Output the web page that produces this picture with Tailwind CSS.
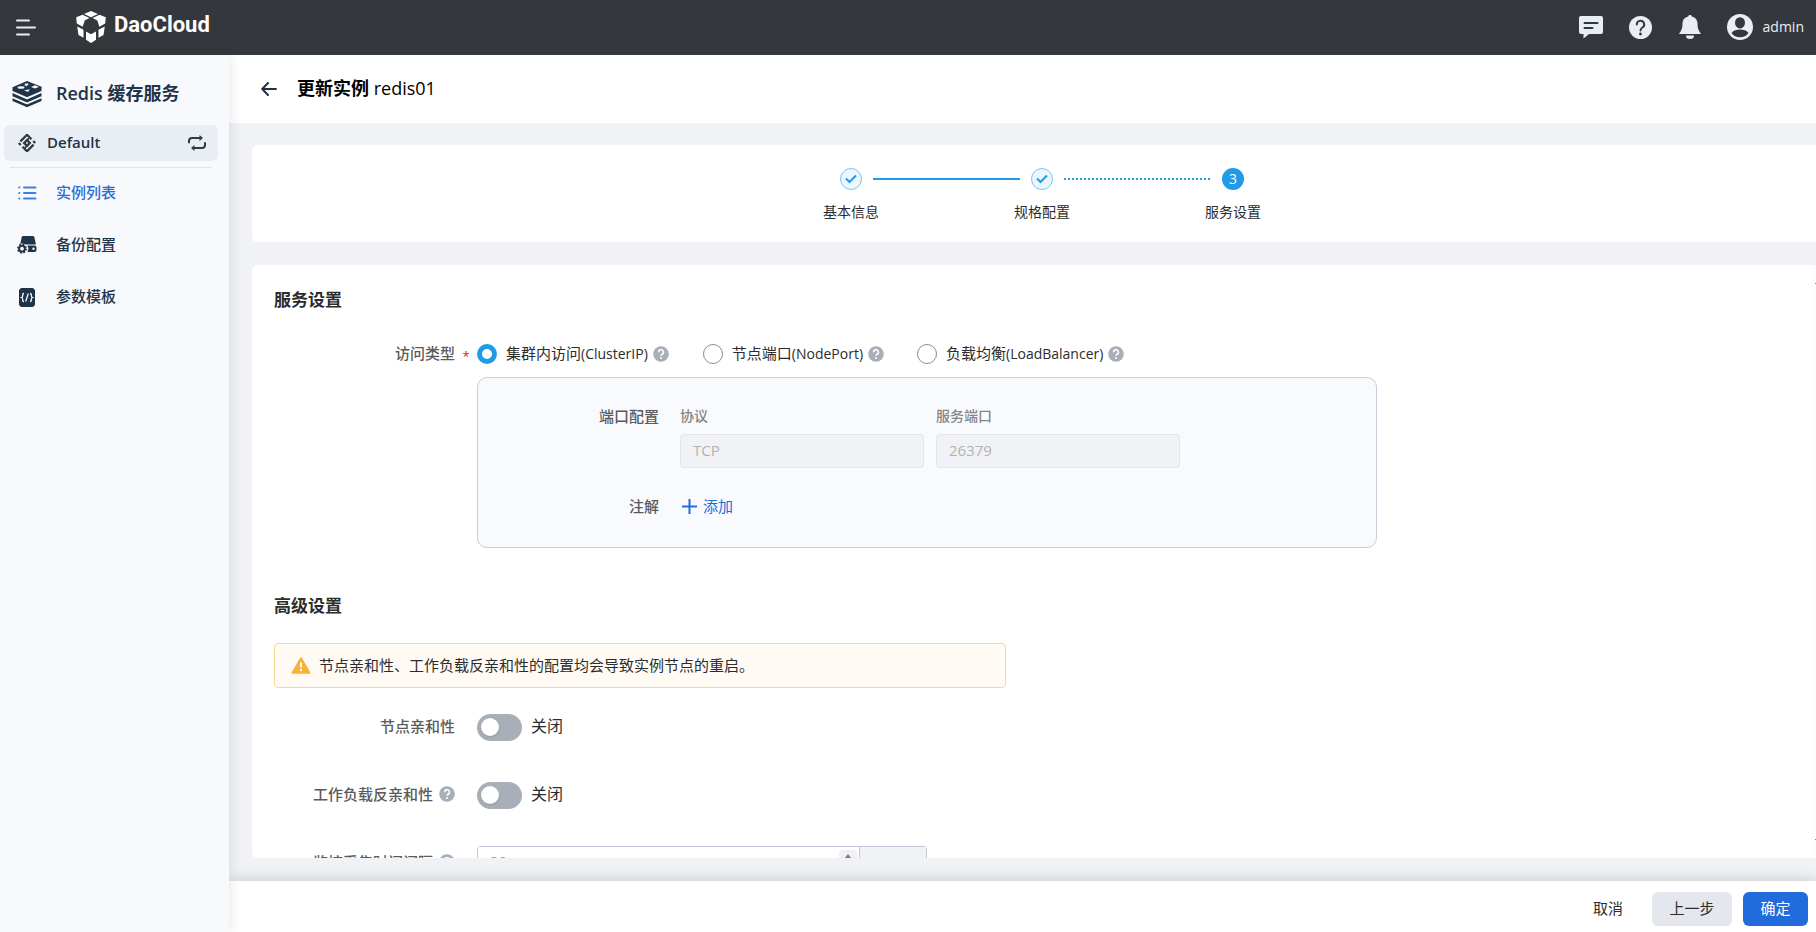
<!DOCTYPE html>
<html lang="zh-CN">
<head>
<meta charset="utf-8">
<title>更新实例 redis01</title>
<script src="https://cdn.jsdelivr.net/npm/@tailwindcss/browser@4"></script>
</head>
<body class="flex h-screen flex-col overflow-hidden bg-[#f1f2f6] font-['Open_Sans','Noto_Sans_CJK_SC',sans-serif] text-[15px] leading-5 text-[#2c2c2c]">
<svg class="hidden" aria-hidden="true">
  <symbol id="help" viewBox="0 0 16 16"><circle cx="8" cy="8" r="7.8" fill="#a9afb8"/><path d="M5.6 6.2a2.4 2.4 0 1 1 3.5 2.1c-.8.4-1.1.8-1.1 1.5" fill="none" stroke="#fff" stroke-width="1.6"/><circle cx="8" cy="12" r="1" fill="#fff"/></symbol>
</svg>

<header class="flex h-[55px] shrink-0 items-center bg-[#34373c] pr-3 pb-px pl-4 text-[#e9eef5]">
  <button type="button" aria-label="菜单" class="mr-10"><svg class="h-[17px] w-5" viewBox="0 0 20 17" stroke="currentColor" stroke-width="2" stroke-linecap="round"><path d="M1 1.500h12M1 8.500h18M1 15.500h12"/></svg></button>
  <a href="#" class="flex items-center gap-2 text-white">
    <svg class="h-8 w-[30px]" viewBox="0 0 30 32" fill="currentColor"><path d="M15 0l7 3-7 3.200L8 3zM6.500 3.800l7 3.200-4.800 2.600-2 6.200L.8 12.500.2 6.200zM23.500 3.800l-7 3.200 4.800 2.600 2 6.200 5.900-3.300.6-6.300zM1.200 15.500l6.300 3.300v8L2.500 24zM28.800 15.500l-6.300 3.300v8l5-2.800zM10 20.500l5 2.800 5-2.800v8.300L15 32l-5-3.200z"/></svg>
    <span class="pb-1 font-[Roboto] text-[22px] leading-7 font-bold">DaoCloud</span>
  </a>
  <div class="ml-auto flex items-center">
    <button type="button" aria-label="消息"><svg class="h-[23px] w-6" viewBox="0 0 24 23"><path d="M2 0h20a2 2 0 0 1 2 2v14a2 2 0 0 1-2 2H10l-5.500 4.500V18H2a2 2 0 0 1-2-2V2a2 2 0 0 1 2-2z" fill="currentColor"/><path d="M5.500 7h13M5.500 12h8" stroke="#34373c" stroke-width="2" stroke-linecap="round"/></svg></button>
    <button type="button" aria-label="帮助" class="ml-[26px]"><svg class="size-[23px]" viewBox="0 0 23 23"><circle cx="11.500" cy="11.500" r="11.500" fill="currentColor"/><path d="M7.800 8.500a3.700 3.600 0 1 1 5.600 3c-1.400.8-1.900 1.400-1.900 2.900" fill="none" stroke="#34373c" stroke-width="2" stroke-linecap="round"/><circle cx="11.500" cy="18" r="1.400" fill="#34373c"/></svg></button>
    <button type="button" aria-label="通知" class="ml-[27px]"><svg class="h-6 w-[22px]" viewBox="0 0 22 24" fill="currentColor"><path d="M11 0c1 0 1.700.6 1.800 1.400C16.500 2.300 18.500 5 18.500 8.500c0 5 1 6.500 3.500 10.500H0c2.500-4 3.500-5.500 3.500-10.500 0-3.500 2-6.200 5.700-7.100C9.300.6 10 0 11 0zM7 20.500h8a4 3.500 0 0 1-8 0z"/></svg></button>
    <button type="button" class="ml-[26px] flex items-center gap-[10px] text-[14px]"><svg class="size-[26px]" viewBox="0 0 26 26"><circle cx="13" cy="13" r="13" fill="currentColor"/><ellipse cx="13" cy="8.800" rx="5" ry="5.600" fill="#34373c"/><path d="M4.500 19c2-2.400 5-3.400 8.500-3.400s6.500 1 8.500 3.400A10.500 10.500 0 0 1 13 23.300 10.500 10.500 0 0 1 4.500 19z" fill="#34373c"/></svg><span>admin</span></button>
  </div>
</header>

<div class="flex min-h-0 flex-1">
  <aside class="z-10 w-[229px] shrink-0 bg-[#f7f9fd] text-[#1f3447] shadow-[2px_0_12px_rgba(0,0,0,0.09)]">
    <div class="flex h-[70px] items-center gap-[14px] pt-2 pl-3">
      <svg class="h-[26px] w-[30px]" viewBox="0 0 30 26"><g fill="currentColor"><path d="M15 0l14.500 5.700c.5.300.5.700 0 1V10L16 15.800c-.7.300-1.300.300-2 0L.5 10V6.300z"/><path d="M.5 12l13.500 5.900c.7.300 1.300.300 2 0L29.500 12v3.300L16 21c-.7.300-1.300.300-2 0L.5 15.300z"/><path d="M.5 17.200L14 23c.7.300 1.300.300 2 0l13.500-5.800v2.900L16 25.800c-.7.300-1.300.300-2 0L.5 20.100z"/></g><g fill="#f7f9fd"><path d="M13 2.200l1.600.6 1.600-.7-.4 1.300 1.700.6-2.200.3-.9 1.300-.8-1.200-2.200-.2 1.800-.7z"/><ellipse cx="9" cy="6.500" rx="3.500" ry="1.300"/><path d="M19 6l4-1.700 4 1.600-4 1.600zM12 9.200l6-1-2 2.700z"/></g></svg>
      <h1 class="pb-[2px] text-[18px] leading-6 font-semibold">Redis 缓存服务</h1>
    </div>
    <button type="button" class="mr-[11px] ml-1 flex h-9 w-[214px] items-center rounded-md bg-[#e9eef5] pr-3 pl-[14px] font-semibold">
      <svg class="size-[18px]" viewBox="0 0 18 18" fill="none" stroke="#333a42" stroke-width="2.300"><g transform="rotate(45 9 9)"><path d="M3.200 12.500V3.200h6.300M14.800 5.500v9.300H8.500M12 3.200h2.800M6 14.800H3.200"/><path d="M7 7h4v4H7z"/><path d="M7 7V4M11 11v3" stroke-width="1.800"/></g></svg>
      <span class="ml-[11px] pb-[2px]">Default</span>
      <svg class="ml-auto h-4 w-[18px]" viewBox="0 0 18 16" fill="none" stroke="#333a42" stroke-width="2" stroke-linecap="round" stroke-linejoin="round"><path d="M1 7.500V6a3 3 0 0 1 3-3h9M17 8v2a3 3 0 0 1-3 3H5"/><path d="M11.500 0v6L15 3zM6.500 10v6L3 13z" fill="#333a42" stroke="none"/></svg>
    </button>
    <hr class="mr-[17px] ml-[10px] mt-[6px] border-[#e0e3e9]">
    <nav class="font-medium text-[#1f3447]">
      <a href="#" class="flex h-[52px] items-center gap-[19px] pb-[2px] pl-[18px] text-[#2a6fd6]"><svg class="h-[14px] w-[19px]" viewBox="0 0 19 14" fill="none" stroke="#3f80e6" stroke-width="2" stroke-linecap="round"><path d="M6 1.500h11.500M6 7h11.500M6 12.500h11.500M1.200 1.500h.2M1.200 7h.2M1.200 12.500h.2"/></svg><span class="pb-[2px]">实例列表</span></a>
      <a href="#" class="flex h-[52px] items-center gap-[19px] pb-[2px] pl-[17px]"><svg class="h-[18px] w-5" viewBox="0 0 20 18"><path d="M6.500 0h9c1 0 1.500.5 1.800 1.300L19 8.500H3.200l1.500-7.200C5 .5 5.500 0 6.500 0z" fill="currentColor"/><path d="M10.500 9.500h7a2 2 0 0 1 2 2v2.500a2 2 0 0 1-2 2h-7l1-3.200z" fill="currentColor"/><circle cx="16.500" cy="12.700" r="1.200" fill="#f7f9fd"/><circle cx="5" cy="12.700" r="5.300" fill="#f7f9fd"/><circle cx="5" cy="12.700" r="2.900" fill="none" stroke="currentColor" stroke-width="2"/><circle cx="5" cy="12.700" r="4.200" fill="none" stroke="currentColor" stroke-width="1.600" stroke-dasharray="1.650 1.650"/></svg><span class="pb-[2px]">备份配置</span></a>
      <a href="#" class="flex h-[52px] items-center gap-[21px] pb-[2px] pl-[19px]"><svg class="h-[19px] w-4" viewBox="0 0 16 19"><path d="M2 0h12l2 2v15l-2 2H2l-2-2V2z" fill="currentColor"/><path d="M5 5.500c-1.500 0-1.300 1-1.300 2 0 1.200-.3 1.700-1.200 2 .9.300 1.200.8 1.200 2 0 1-.2 2 1.300 2M11 5.500c1.500 0 1.300 1 1.300 2 0 1.200.3 1.700 1.200 2-.9.300-1.200.8-1.200 2 0 1 .2 2-1.300 2M9.300 5.500l-2.600 8" fill="none" stroke="#f7f9fd" stroke-width="1.300"/></svg><span class="pb-[2px]">参数模板</span></a>
    </nav>
  </aside>

  <div class="flex min-w-0 flex-1 flex-col">
    <div class="flex h-[68px] shrink-0 items-center bg-white pl-8 text-black">
      <button type="button" aria-label="返回"><svg class="h-[14px] w-4" viewBox="0 0 16 14" fill="none" stroke="#1f3447" stroke-width="2" stroke-linecap="round" stroke-linejoin="round"><path d="M15 7H1.500M7 1L1.200 7 7 13"/></svg></button>
      <h2 class="ml-5 pb-[2px] text-[18px] leading-6 font-normal"><span class="font-bold">更新实例</span> redis01</h2>
    </div>

    <main class="flex min-h-0 flex-1 flex-col gap-[23px] pt-[22px] pb-[23px] pl-[23px]">
      <ol class="flex shrink-0 justify-center rounded-l-md bg-white pt-[23px] pb-5 pl-4 text-[14px]">
        <li class="flex w-[22px] flex-col items-center gap-3 whitespace-nowrap"><span class="flex size-[22px] items-center justify-center rounded-full border border-[#7cc4f0] bg-[#ebf6fe]"><svg class="size-3" viewBox="0 0 12 12" fill="none" stroke="#1f9be8" stroke-width="2"><path d="M1 5.500l3.500 3.500L11 2.500"/></svg></span>基本信息</li>
        <li aria-hidden="true" class="mx-[11px] mt-[10px] h-0 w-[147px] border-t-2 border-[#1f9be8]"></li>
        <li class="flex w-[22px] flex-col items-center gap-3 whitespace-nowrap"><span class="flex size-[22px] items-center justify-center rounded-full border border-[#7cc4f0] bg-[#ebf6fe]"><svg class="size-3" viewBox="0 0 12 12" fill="none" stroke="#1f9be8" stroke-width="2"><path d="M1 5.500l3.500 3.500L11 2.500"/></svg></span>规格配置</li>
        <li aria-hidden="true" class="mx-[11px] mt-[10px] h-[2px] w-[147px] bg-[repeating-linear-gradient(to_right,#1f9be8_0_2px,transparent_2px_4px)]"></li>
        <li class="flex w-[22px] flex-col items-center gap-3 whitespace-nowrap"><span class="flex size-[22px] items-center justify-center rounded-full bg-[#1f9be8] text-white">3</span>服务设置</li>
      </ol>

      <form class="flex min-h-0 flex-1 overflow-hidden rounded-l-md bg-white">
        <div class="min-w-0 flex-1 pt-6 pl-[22px]">
          <h3 class="text-[17px] leading-[22px] font-bold">服务设置</h3>

          <div class="mt-[26px] flex h-[34px] items-center">
            <span class="w-[181px] pb-[2px] text-right font-medium text-[#5b5b5b]">访问类型</span>
            <span class="w-[22px] pt-1 text-center text-[13px] text-[#e02020]">*</span>
            <label class="flex items-center"><input type="radio" name="access" checked class="mr-[9px] size-5 appearance-none rounded-full border border-[#888d95] checked:border-[5px] checked:border-[#1f9be8]"><span class="pb-px">集群内访问<span class="text-[14px]">(ClusterIP)</span></span></label>
            <svg class="ml-[5px] size-4"><use href="#help"/></svg>
            <label class="ml-[34px] flex items-center"><input type="radio" name="access" class="mr-[9px] size-5 appearance-none rounded-full border border-[#888d95] checked:border-[5px] checked:border-[#1f9be8]"><span class="pb-px">节点端口<span class="text-[14px]">(NodePort)</span></span></label>
            <svg class="ml-[5px] size-4"><use href="#help"/></svg>
            <label class="ml-[33px] flex items-center"><input type="radio" name="access" class="mr-[9px] size-5 appearance-none rounded-full border border-[#888d95] checked:border-[5px] checked:border-[#1f9be8]"><span class="pb-px">负载均衡<span class="text-[14px]">(LoadBalancer)</span></span></label>
            <svg class="ml-[5px] size-4"><use href="#help"/></svg>
          </div>

          <div class="mt-[6px] ml-[203px] max-w-[900px] rounded-[10px] border border-[#c9cdd7] bg-[#f9fafd] pt-7 pb-6">
            <div class="flex">
              <span class="mr-[21px] w-[181px] text-right font-medium text-[#5b5b5b]">端口配置</span>
              <div class="flex gap-3 text-[14px]">
                <label class="flex flex-col gap-2 font-medium text-[#858585]">协议<input type="text" value="TCP" disabled class="h-[34px] w-[244px] rounded-[3px] border border-[#e4e6ec] bg-[#f1f2f6] px-3 pb-[2px] text-[15px] font-normal text-[#b2b2b2]"></label>
                <label class="flex flex-col gap-2 font-medium text-[#858585]">服务端口<input type="text" value="26379" disabled class="h-[34px] w-[244px] rounded-[3px] border border-[#e4e6ec] bg-[#f1f2f6] px-3 pb-[2px] text-[15px] font-normal text-[#b2b2b2]"></label>
              </div>
            </div>
            <div class="mt-[21px] flex h-[34px] items-center">
              <span class="mr-[23px] w-[181px] text-right font-medium text-[#5b5b5b]">注解</span>
              <button type="button" class="flex items-center gap-[6px] text-[#226bdc]"><svg class="size-[15px]" viewBox="0 0 15 15" stroke="currentColor" stroke-width="2"><path d="M7.500 0v15M0 7.500h15"/></svg>添加</button>
            </div>
          </div>

          <h3 class="mt-[47px] text-[17px] leading-[22px] font-bold">高级设置</h3>
          <div role="alert" class="mt-[26px] flex h-[45px] max-w-[732px] items-center gap-2 rounded-[4px] border border-[#f8d88e] bg-[#fffbf4] pl-4">
            <svg class="h-[17px] w-5" viewBox="0 0 20 17"><path d="M10 1.200L18.500 15.700h-17z" fill="#f5b43a" stroke="#f5b43a" stroke-width="2" stroke-linejoin="round"/><path d="M10 5.500v5M10 12v2" stroke="#fff" stroke-width="2"/></svg>
            <span class="pb-[2px]">节点亲和性、工作负载反亲和性的配置均会导致实例节点的重启。</span>
          </div>

          <div class="mt-[22px] flex h-[34px] items-center">
            <label for="affinity" class="mr-[22px] w-[181px] pb-[2px] text-right font-medium text-[#5b5b5b]">节点亲和性</label>
            <input id="affinity" type="checkbox" role="switch" class="flex h-[27px] w-[45px] appearance-none items-center rounded-full bg-[#a9afb8] pl-1 before:size-[18px] before:rounded-full before:bg-white before:shadow-sm">
            <span class="ml-[9px] pb-[2px] text-[16px]">关闭</span>
          </div>
          <div class="mt-[34px] flex h-[34px] items-center">
            <span class="mr-[22px] flex w-[181px] items-center justify-end gap-[6px] pb-[2px] font-medium text-[#5b5b5b]"><label for="anti">工作负载反亲和性</label><svg class="size-4"><use href="#help"/></svg></span>
            <input id="anti" type="checkbox" role="switch" class="flex h-[27px] w-[45px] appearance-none items-center rounded-full bg-[#a9afb8] pl-1 before:size-[18px] before:rounded-full before:bg-white before:shadow-sm">
            <span class="ml-[9px] pb-[2px] text-[16px]">关闭</span>
          </div>
          <div class="mt-[34px] flex h-[34px] items-center">
            <span class="mr-[22px] flex w-[181px] items-center justify-end gap-[6px] pb-[2px] font-medium text-[#5b5b5b]"><label for="interval">监控采集时间间隔</label><svg class="size-4"><use href="#help"/></svg></span>
            <div class="flex h-[34px] w-[450px] rounded-[3px] border border-[#c5c7d6]">
              <input id="interval" type="text" value="30" class="min-w-0 flex-1 bg-white px-3 pb-1 text-[#a0a0a0]">
              <div class="mt-[3px] mr-[2px] flex h-[26px] w-[18px] flex-col gap-px text-[#7c828c]">
                <button type="button" aria-label="增加" class="flex flex-1 items-center justify-center rounded-[2px] bg-[#f1f2f6]"><svg class="h-[5px] w-2" viewBox="0 0 8 5" fill="currentColor"><path d="M4 0l4 5H0z"/></svg></button>
                <button type="button" aria-label="减少" class="flex flex-1 items-center justify-center rounded-[2px] bg-[#f1f2f6]"><svg class="h-[5px] w-2" viewBox="0 0 8 5" fill="currentColor"><path d="M4 5l4-5H0z"/></svg></button>
              </div>
              <span class="flex w-[67px] items-center justify-center border-l border-[#c5c7d6] bg-[#f1f2f6]">s</span>
            </div>
          </div>
        </div>
        <div aria-hidden="true" class="flex w-1 shrink-0 flex-col items-end justify-between bg-[#fcfcfc] py-[18px]"><span class="h-px w-px bg-[#858585]"></span><span class="h-px w-px bg-[#858585]"></span></div>
      </form>
    </main>

    <footer class="flex h-[51px] shrink-0 items-center justify-end bg-white pt-[5px] pr-2 shadow-[0_-2px_12px_rgba(0,0,0,0.15)]">
      <button type="button" class="mr-[29px] h-[34px] pb-[2px]">取消</button>
      <button type="button" class="mr-[11px] h-[34px] w-20 rounded-md bg-[#e4e7ee] pb-[2px]">上一步</button>
      <button type="button" class="h-[34px] w-[65px] rounded-md bg-[#226bdc] pb-[2px] text-white">确定</button>
    </footer>
  </div>
</div>
</body>
</html>
